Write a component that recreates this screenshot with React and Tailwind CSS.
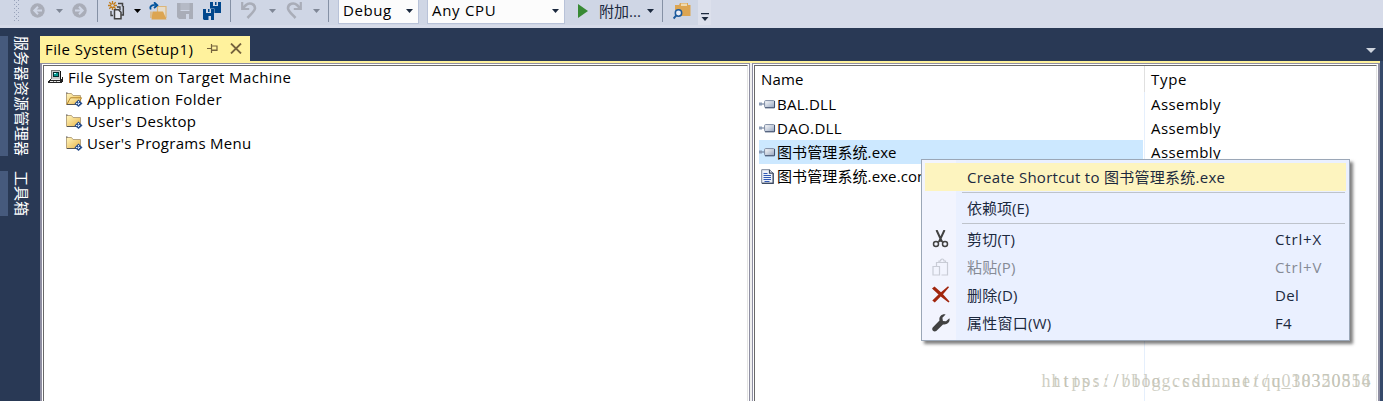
import React from 'react'
import clsx from 'clsx'

const Caret = ({ className = 'text-[#1b293e]' }) => (
  <svg width="7" height="4" viewBox="0 0 7 4" className={clsx('shrink-0', className)}>
    <path d="M0 0h7L3.5 4z" fill="currentColor" />
  </svg>
)

const Divider = ({ className }) => (
  <div className={clsx('w-px h-[22px] bg-[#8591a5] shrink-0 self-start', className)} />
)

const Grip = () => (
  <svg width="6" height="22" viewBox="0 0 6 22" className="shrink-0 self-start" fill="#99a3ba">
    {[0, 4, 8, 12, 16, 20].map((y) => (
      <g key={y}>
        <rect x="0" y={y} width="1" height="1" />
        <rect x="4" y={y} width="1" height="1" />
        <rect x="2" y={y + 2} width="1" height="1" />
      </g>
    ))}
  </svg>
)

const ArrowCircle = ({ forward }) => (
  <svg width="15" height="15" viewBox="0 0 15 15" className={clsx('shrink-0', forward && '-scale-x-100')}>
    <circle cx="7.5" cy="7.5" r="7.2" fill="#a9adb8" />
    <path d="M12 7.5H4.5M8 3.8L4.3 7.5L8 11.2" fill="none" stroke="#cfd6e5" strokeWidth="2" />
  </svg>
)

const NewProjectIcon = () => (
  <svg width="18" height="19" viewBox="0 0 18 19" className="shrink-0" fill="none">
    <path d="M10 2.500h4.500v3M15.300 5v9h-2" stroke="#424242" strokeWidth="1.500" />
    <path d="M3 10v4.500h2M9 6h3v3" stroke="#424242" strokeWidth="1.300" />
    <path d="M6.500 8.800h4l2.500 2.500v6.500h-6.500z" fill="#e4e7ef" stroke="#424242" strokeWidth="1.500" />
    <path d="M4.500 0v9M0 4.500h9M1.300 1.300l6.400 6.400M7.700 1.300L1.300 7.700" stroke="#c27d1a" strokeWidth="1.300" />
    <circle cx="4.500" cy="4.500" r="1.300" fill="#cfd6e5" />
  </svg>
)

const OpenIcon = () => (
  <svg width="19" height="18" viewBox="0 0 19 18" className="shrink-0">
    <path d="M8.500 4.500h8.500v11H8.500z" fill="#e6dccb" stroke="#dcb67a" strokeWidth="1.200" />
    <path d="M3.500 9.500h10.500L17.500 17.500H2.500z" fill="#dca552" />
    <path d="M2 16V9.500" stroke="#dcb67a" strokeWidth="1.500" />
    <path d="M1.800 7.500C0 3.500 4 2.500 8 3.200M5 .3L8.300 3.200L5 6" fill="none" stroke="#00539c" strokeWidth="1.800" />
  </svg>
)

const SaveIcon = () => (
  <svg width="16" height="16" viewBox="0 0 16 16" className="shrink-0">
    <path d="M0 0h16v16H2l-2-2z" fill="#a9adb8" />
    <path d="M3.500 0h9v7h-9z" fill="#b5bac6" />
    <path d="M4 11h8v5H4z" fill="#cfd6e5" />
    <path d="M4 11h5v5H4z" fill="#a9adb8" />
    <path d="M3.500 7.500h9" stroke="#cfd6e5" />
  </svg>
)

const SaveAllIcon = () => (
  <svg width="18" height="18" viewBox="0 0 18 18" className="shrink-0">
    <path d="M7 0h11v11H7z" fill="#00468c" />
    <path d="M10 0h5v4h-5z" fill="#cfd6e5" />
    <path d="M12 0h1.500v3H12z" fill="#00468c" />
    <path d="M-.4 6.600h11.800v11.800H-.4z" fill="#cfd6e5" />
    <path d="M0 7h11v11H1l-1-1z" fill="#00468c" />
    <path d="M3 7h5v4H3zM5.500 14H8v4H5.500z" fill="#cfd6e5" />
    <path d="M5 7h1.500v3H5z" fill="#00468c" />
  </svg>
)

const UndoIcon = ({ redo }) => (
  <svg width="16" height="17" viewBox="0 0 16 17" className={clsx('shrink-0', redo && '-scale-x-100')}>
    <path d="M1.200 0v7h7" fill="none" stroke="#a9adb8" strokeWidth="2.200" />
    <path d="M1.500 6.500L5 3C8 .3 14 1.300 14 6.200c0 2.500-2 4-7.500 9.800" fill="none" stroke="#a9adb8" strokeWidth="2.600" />
  </svg>
)

const FindInFilesIcon = () => (
  <svg width="18" height="18" viewBox="0 0 18 18" className="shrink-0">
    <path d="M2 3h4l1-2h8v2h2.500v11H6V8H2z" fill="#dca552" />
    <path d="M8 1.500h6V4H8z" fill="#efd9ae" />
    <circle cx="5.500" cy="11" r="3.200" fill="#e8ecf5" stroke="#1c5a9c" strokeWidth="1.500" />
    <path d="M3.200 13.300L.6 16.500" stroke="#1c5a9c" strokeWidth="2" />
  </svg>
)

const ComputerIcon = () => (
  <svg width="15" height="14" viewBox="0 0 15 14" className="shrink-0" shapeRendering="crispEdges">
    <path d="M3 0h9v1h1v8H3z" fill="#c8c8c8" />
    <path d="M3 0h9v1H4v8H3z" fill="#777" />
    <path d="M12 1h1v8h-1z" fill="#111" />
    <path d="M5 2h6v5H5z" fill="#062d2d" />
    <path d="M6 3h4v3H6z" fill="#079a91" />
    <path d="M6 3h2v1H6z" fill="#bff" />
    <path d="M2 9h12v-2h1v5h-1v1H0v-2h1v-1h1z" fill="#222" />
    <path d="M3 9h9v1H3zM2 11h10v1H2z" fill="#e8e8e8" />
    <path d="M5 11h1v1H5zM8 11h1v1H8z" fill="#777" />
  </svg>
)

const FolderIcon = ({ open }) => (
  <svg width="17" height="15" viewBox="0 0 17 15" className="shrink-0">
    <defs>
      <linearGradient id="folder" x1="0" y1="0" x2="1" y2="1">
        <stop offset="0" stopColor="#fff6bf" />
        <stop offset="1" stopColor="#e9b447" />
      </linearGradient>
    </defs>
    <path d="M.5 12.500V1.500h5l1.500 2h7.500v9z" fill="url(#folder)" stroke="#b8a580" />
    {open && <path d="M.8 12.500L4.500 5.800h11L12 12.500z" fill="url(#folder)" stroke="#b48428" />}
    <path d="M0 1h1.500M1 12.500h9" stroke="#555" />
    <path d="M12.500 7.500L16.500 11.500L12.500 15L8.500 11.500z" fill="#294f8c" />
    <path d="M12.500 9v5M10 11.500h5" stroke="#dbe8fa" strokeDasharray="1.500 1" />
  </svg>
)

const AssemblyIcon = () => (
  <svg width="17" height="10" viewBox="0 0 17 10" className="shrink-0">
    <defs>
      <linearGradient id="assembly" x1="0" y1="0" x2="1" y2="1">
        <stop offset="0" stopColor="#fff" />
        <stop offset="1" stopColor="#92a2bd" />
      </linearGradient>
    </defs>
    <path d="M0 3.500h3v3H0z" fill="#8b9bb4" />
    <path d="M3 5h3" stroke="#5c6e8c" />
    <rect x="5.600" y="1.600" width="10" height="7" rx="1" fill="url(#assembly)" stroke="#7d8ba3" />
    <path d="M6 8.800h9.500V2" fill="none" stroke="#42526f" strokeWidth="1" />
  </svg>
)

const ConfigFileIcon = () => (
  <svg width="13" height="15" viewBox="0 0 13 15" className="shrink-0">
    <path d="M.7.700h7.800l3.700 3.500v10H.7z" fill="#eef2f9" stroke="#7a869b" />
    <path d="M8.500.7v3.500h3.700M12.200 4v10.300H1" fill="none" stroke="#3c4a62" strokeWidth="1.200" />
    <path d="M2.500 4.500h4M2.500 6.500h7.500M2.500 8.500h7.500M2.500 10.500h7.500M3.500 12.500h5" stroke="#2f58b4" />
  </svg>
)

const CutIcon = () => (
  <svg width="17" height="18" viewBox="0 0 17 18" fill="none" stroke="#424242">
    <path d="M4.500 0L9.800 11.500M12.500 0L7.200 11.500" strokeWidth="2" />
    <circle cx="4" cy="14" r="2.500" strokeWidth="1.500" />
    <circle cx="13" cy="14" r="2.500" strokeWidth="1.500" />
    <path d="M6 12.500L8.500 10L11 12.500" strokeWidth="1.500" />
  </svg>
)

const PasteIcon = () => (
  <svg width="17" height="18" viewBox="0 0 17 18" fill="none" stroke="#c9ccd6" strokeWidth="1.200">
    <path d="M4.500 8V4.500h11v12.500H9.500" />
    <path d="M7 4.500V3h1.500C8.500.3 12 .3 12 3h1.500v1.500" />
    <path d="M1 8.500h6.500V17H1z" />
  </svg>
)

const DeleteIcon = () => (
  <svg width="18" height="17" viewBox="0 0 18 17" fill="#a1260d">
    <path d="M0 2.500L2.500 .5L9 6.200L16 .3L17 1.300L11 8.200L17.500 15.500L16.500 16.500L8.700 10.500L2.800 16.500L.3 14.500L6.500 8.400z" />
  </svg>
)

const WrenchIcon = () => (
  <svg width="18" height="18" viewBox="0 0 18 18" fill="#424242">
    <path d="M13.600.4C10 -.6 6.600 2.500 7.500 6.600L.7 13.400C-1 16 2 18.600 4.300 17L11 10.400C15 11.400 18.500 8 17.400 4.200L14 7.300L10.900 6.900L10.400 3.700z" />
  </svg>
)

const TREE = [
  { label: 'Application Folder', open: true, tracking: 'tracking-[0.48px]' },
  { label: "User's Desktop", tracking: 'tracking-[0.32px]' },
  { label: "User's Programs Menu", tracking: 'tracking-[0.27px]' },
]

const FILES = [
  { name: 'BAL.DLL', type: 'Assembly', icon: AssemblyIcon, tracking: 'tracking-[0.25px]' },
  { name: 'DAO.DLL', type: 'Assembly', icon: AssemblyIcon, tracking: 'tracking-[0.35px]' },
  { name: '图书管理系统.exe', type: 'Assembly', icon: AssemblyIcon, selected: true, tracking: 'tracking-[0.1px]' },
  { name: '图书管理系统.exe.config', icon: ConfigFileIcon, tracking: 'tracking-[0.1px]' },
]

const MENU = [
  { label: 'Create Shortcut to 图书管理系统.exe', active: true, tracking: 'tracking-[0.27px]' },
  null,
  { label: '依赖项(E)' },
  null,
  { label: '剪切(T)', keys: 'Ctrl+X', icon: CutIcon, tracking: 'tracking-[0.2px]' },
  { label: '粘贴(P)', keys: 'Ctrl+V', icon: PasteIcon, disabled: true, tracking: 'tracking-[0.15px]' },
  { label: '删除(D)', keys: 'Del', icon: DeleteIcon, tracking: 'tracking-[0.2px]' },
  { label: '属性窗口(W)', keys: 'F4', icon: WrenchIcon, tracking: 'tracking-[0.25px]' },
]

const Toolbar = () => (
  <header className="h-7 shrink-0 bg-[#d6dbe9]">
    <div className="flex h-[25px] w-[711px] bg-[#cfd6e5] pl-[14px] text-black">
      <Grip />
      <div className="flex items-center h-[21px]">
        <span className="ml-[10px]"><ArrowCircle /></span>
        <Caret className="ml-[11px] text-[#7f8796]" />
        <span className="ml-[9px]"><ArrowCircle forward /></span>
        <Divider className="ml-[10px]" />
        <span className="ml-[10px]"><NewProjectIcon /></span>
        <Caret className="ml-[8px]" />
        <span className="ml-[8px]"><OpenIcon /></span>
        <span className="ml-[9px]"><SaveIcon /></span>
        <span className="ml-[10px]"><SaveAllIcon /></span>
        <Divider className="ml-[9px]" />
        <span className="ml-[10px]"><UndoIcon /></span>
        <Caret className="ml-[12px] text-[#7f8796]" />
        <span className="ml-[10px]"><UndoIcon redo /></span>
        <Caret className="ml-[11px] text-[#7f8796]" />
        <Divider className="ml-[8px]" />
      </div>
      <div className="ml-[9px] flex h-6 w-[81px] items-center justify-between border border-t-0 border-[#b8c2d8] bg-[#fcfcfc] pl-1 pr-[5px] pb-[2px]">
        <span className="relative -top-px tracking-[0.55px]">Debug</span>
        <Caret />
      </div>
      <div className="ml-2 flex h-6 w-[138px] items-center justify-between border border-t-0 border-[#b8c2d8] bg-[#fcfcfc] pl-1 pr-[5px] pb-[2px]">
        <span className="relative -top-px tracking-[0.7px]">Any CPU</span>
        <Caret />
      </div>
      <div className="flex items-center h-[21px]">
        <svg width="10" height="14" viewBox="0 0 10 14" className="ml-[13px] shrink-0">
          <path d="M0 0L10 7L0 14z" fill="#388a34" />
        </svg>
        <span className="ml-[11px] w-[48px] text-[#1b293e]">附加...</span>
        <Caret />
        <Divider className="ml-[8px]" />
        <span className="ml-[10px]"><FindInFilesIcon /></span>
      </div>
      <div className="ml-auto flex h-[25px] w-[13px] justify-center bg-[#dce0ec] pt-[13px]">
        <svg width="8" height="8" viewBox="0 0 8 8">
          <path d="M0 0h8v1.200H0zM.5 4h7L4 8z" fill="#1b293e" />
        </svg>
      </div>
    </div>
  </header>
)

const SideTab = ({ label, className }) => (
  <div className={clsx('flex', className)}>
    <div className="w-2 bg-[#465a7d]" />
    <span className="ml-[5px] w-[17px] text-[15px] leading-[17px] text-white whitespace-nowrap [writing-mode:vertical-rl] [text-orientation:sideways]">
      {label}
    </span>
  </div>
)

// Sunken double border of the classic Win32 client edge
const Sunken = ({ className, children }) => (
  <div className={clsx('border-t border-[#8e8ea2] bg-white pl-px pt-px pr-px', className)}>
    <div className="h-full border-l border-t border-l-[#696969] border-t-[#696969] border-r border-r-[#e3e3e3]">
      {children}
    </div>
  </div>
)

const FileTree = () => (
  <div className="flex flex-col pl-[4px]">
    <div className="flex h-[22px] items-center">
      <ComputerIcon />
      <span className="ml-[5px] tracking-[0.38px]">File System on Target Machine</span>
    </div>
    {TREE.map((node) => (
      <div key={node.label} className="flex h-[22px] items-center pl-[18px]">
        <FolderIcon open={node.open} />
        <span className={clsx('ml-1', node.tracking)}>{node.label}</span>
      </div>
    ))}
  </div>
)

const FileList = () => (
  <div className="flex h-full flex-col">
    <div className="flex h-[26px]">
      <div className="h-full w-[390px] shrink-0 border-r border-[#e0e0e0] pl-[6px] leading-[27px] tracking-[0.2px]">Name</div>
      <div className="pl-[6px] leading-[27px] tracking-[0.7px]">Type</div>
    </div>
    <div className="flex flex-1">
      <div className="w-[390px] shrink-0 border-r border-[#e5effc] pl-1">
        {FILES.map(({ name, icon: Icon, selected, tracking }) => (
          <div key={name} className={clsx('flex h-6 w-[384px] items-center', selected && 'bg-[#cce8ff]')}>
            <span className="flex w-[18px] items-center">
              <span className={clsx(Icon === ConfigFileIcon && 'ml-[2px]')}><Icon /></span>
            </span>
            <span className={tracking}>{name}</span>
          </div>
        ))}
      </div>
      <div className="pl-[6px] tracking-[0.42px]">
        {FILES.map(({ name, type }) => (
          <div key={name} className="flex h-6 items-center">{type}</div>
        ))}
      </div>
    </div>
  </div>
)

const ContextMenu = () => (
  <div className="absolute left-[921px] top-[159px] w-[429px] border border-[#9ba7b7] bg-[#eaf0ff] shadow-[3px_3px_3px_rgba(0,0,0,0.5)]">
    <div className="bg-[linear-gradient(to_right,#f2f4fe_34px,#eaf0ff_34px)] p-[3px]">
      {MENU.map((item, i) =>
        item ? (
          <div
            key={item.label}
            className={clsx(
              'flex h-7 items-center',
              item.active && 'bg-[#fdf4bf]',
              item.disabled ? 'text-[#868b96]' : 'text-[#1b293e]'
            )}
          >
            <span className="flex w-[42px] pb-px pl-[7px]">{item.icon && <item.icon />}</span>
            <span className={clsx('flex-1', item.tracking)}>{item.label}</span>
            {item.keys && (
              <span className={clsx('w-[71px]', item.keys.startsWith('Ctrl') ? 'tracking-[0.85px]' : 'tracking-[0.3px]')}>
                {item.keys}
              </span>
            )}
          </div>
        ) : (
          <div key={i} className="py-px pl-[37px] pr-px">
            <div className="h-px bg-[#bec3cb]" />
          </div>
        )
      )}
    </div>
  </div>
)

const Watermark = ({ text, className }) => (
  <div className={clsx("absolute flex text-[18px] leading-5 text-[#c2c2b4]/80 font-['Liberation_Serif',serif]", className)}>
    {text.split('').map((ch, i) => (
      <span key={i} className="w-[10px] text-center">{ch}</span>
    ))}
  </div>
)

const App = () => (
  <div className="relative flex h-[401px] w-[1383px] flex-col overflow-hidden bg-[#293955] text-[15px] leading-5 whitespace-nowrap text-black font-['Open_Sans','Noto_Sans_CJK_SC',sans-serif]">
    <Toolbar />
    <div className="flex min-h-0 flex-1">
      <aside className="w-10 shrink-0 pt-2">
        <SideTab label="服务器资源管理器" className="h-[120px]" />
        <SideTab label="工具箱" className="mt-[15px] h-[45px]" />
      </aside>
      <main className="flex w-[1340px] flex-col pt-2">
        <div className="flex h-[25px] items-center">
          <div className="flex h-full w-[210px] items-center bg-[#fff29d] pl-[5px]">
            <span className="w-[162px] tracking-[0.42px]">File System (Setup1)</span>
            <svg width="11" height="9" viewBox="0 0 11 9" fill="none" stroke="#75633d">
              <path d="M0 4.500h4M4.500 0v9M4.500 2h5.500v4.500H4.500M4.500 6h5.500" strokeWidth="1.200" />
            </svg>
            <svg width="12" height="11" viewBox="0 0 12 11" className="ml-3">
              <path d="M1 .5L11 10.500M11 .5L1 10.500" stroke="#75633d" strokeWidth="1.800" />
            </svg>
          </div>
          <svg width="10" height="5" viewBox="0 0 10 5" className="ml-auto mr-[4px] mt-[3px]">
            <path d="M0 0h10L5 5z" fill="#ced4dd" />
          </svg>
        </div>
        <div className="h-[2px] shrink-0 bg-[#fff29d]" />
        <div className="flex min-h-0 flex-1 bg-[#f0f0f0]">
          <Sunken className="w-[710px] border-l-2 border-r">
            <FileTree />
          </Sunken>
          <Sunken className="ml-[2px] w-[628px] border-l border-r-2">
            <FileList />
          </Sunken>
        </div>
      </main>
      <div className="mt-[33px] w-[3px] bg-[#35496a]" />
    </div>
    <ContextMenu />
    <Watermark text="https://blog.csdn.net/qq_38320854" className="left-[1041px] top-[371px]" />
    <Watermark text="https://blog.csdn.net/u010350516" className="left-[1051px] top-[371px]" />
  </div>
)

export default App
